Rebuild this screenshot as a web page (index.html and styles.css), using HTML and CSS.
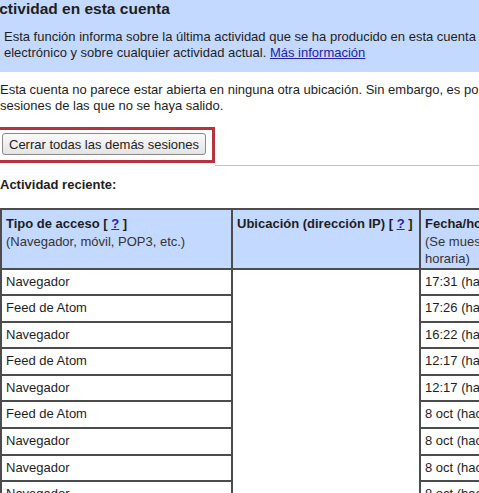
FILE: index.html
```html
<!DOCTYPE html>
<html lang="es">
<head>
<meta charset="utf-8">
<title>Actividad en esta cuenta</title>
<link rel="stylesheet" href="styles.css">
</head>
<body>
<div class="band">
  <h1 class="title">Actividad en esta cuenta</h1>
  <p class="info">Esta función informa sobre la última actividad que se ha producido en esta cuenta de correo<br>electrónico y sobre cualquier actividad actual. <a href="#">Más información</a></p>
</div>
<p class="status">Esta cuenta no parece estar abierta en ninguna otra ubicación. Sin embargo, es posible que haya<br>sesiones de las que no se haya salido.</p>
<div class="actions">
  <div class="highlight"><button class="btn" type="button">Cerrar todas las demás sesiones</button></div>
  <div class="rule"></div>
</div>
<h2 class="subtitle">Actividad reciente:</h2>
<table class="activity">
  <colgroup><col class="c1"><col class="c2"><col class="c3"></colgroup>
  <thead>
    <tr>
      <th><b>Tipo de acceso [ <a href="#">?</a> ]</b><br><span class="note">(Navegador, móvil, POP3, etc.)</span></th>
      <th><b>Ubicación (dirección IP) [ <a href="#">?</a> ]</b></th>
      <th><b>Fecha/hora [ <a href="#">?</a> ]</b><br><span class="note">(Se muestra en tu zona<br>horaria)</span></th>
    </tr>
  </thead>
  <tbody>
    <tr><td>Navegador</td><td class="ip"></td><td>17:31 (hace 4 minutos)</td></tr>
    <tr><td>Feed de Atom</td><td class="ip"></td><td>17:26 (hace 9 minutos)</td></tr>
    <tr><td>Navegador</td><td class="ip"></td><td>16:22 (hace 1 hora)</td></tr>
    <tr><td>Feed de Atom</td><td class="ip"></td><td>12:17 (hace 5 horas)</td></tr>
    <tr><td>Navegador</td><td class="ip"></td><td>12:17 (hace 5 horas)</td></tr>
    <tr><td>Feed de Atom</td><td class="ip"></td><td>8 oct (hace 1 día)</td></tr>
    <tr><td>Navegador</td><td class="ip"></td><td>8 oct (hace 1 día)</td></tr>
    <tr><td>Navegador</td><td class="ip"></td><td>8 oct (hace 1 día)</td></tr>
    <tr><td>Navegador</td><td class="ip"></td><td>8 oct (hace 1 día)</td></tr>
  </tbody>
</table>
</body>
</html>
```
FILE: styles.css
```css
html, body {
  margin: 0;
  padding: 0;
  overflow: hidden;
  background: #fff;
}
body {
  width: 479px;
  height: 493px;
  font-family: "Liberation Sans", Arial, sans-serif;
  font-size: 13px;
  line-height: 16px;
  color: #1e1e1e;
}
a { color: #2424a8; }
.band {
  background: #c3d9ff;
  height: 72px;
  overflow: hidden;
}
.title {
  margin: 0 0 0 -12px;
  font-size: 15.5px;
  line-height: 18px;
  font-weight: bold;
  white-space: nowrap;
}
.info {
  margin: 11px 0 0 0;
  padding-left: 4px;
  white-space: nowrap;
  line-height: 15.5px;
}
.status {
  margin: 10px 0 0 0;
  white-space: nowrap;
}
.actions {
  display: flex;
  margin-top: 13px;
  margin-left: -3px;
}
.highlight {
  border: 3px solid #b8313f;
  padding: 3px 6px 5px 2px;
  margin-bottom: 3px;
}
.btn {
  display: block;
  height: 22px;
  padding: 0 6px;
  font-family: "Liberation Sans", Arial, sans-serif;
  font-size: 13px;
  color: #222;
  border: 1px solid #8a8a8a;
  border-radius: 3px;
  background: linear-gradient(#fafafa, #e4e4e4);
}
.rule {
  flex: 1;
  border-bottom: 1px solid #a9c6ea;
}
.subtitle {
  margin: 11px 0 0 0;
  font-size: 13px;
  line-height: 16px;
  font-weight: bold;
}
.activity {
  margin-top: 15px;
  border-collapse: collapse;
  table-layout: fixed;
  width: 640px;
}
.c1 { width: 231px; }
.c2 { width: 188px; }
.c3 { width: 221px; }
.activity th, .activity td {
  border: 2px solid #4c4c4c;
  text-align: left;
  vertical-align: top;
  white-space: nowrap;
  overflow: hidden;
}
.activity th {
  background: #c3d9ff;
  height: 52px;
  padding: 5px 4px 0 4px;
  line-height: 17.5px;
  font-weight: normal;
}
.note { color: #333; }
.activity td {
  height: 24.6px;
  padding: 0 4px;
  line-height: 24.6px;
  vertical-align: middle;
}
.activity td.ip {
  border-top: 0;
  border-bottom: 0;
  background: #fff;
}
```
